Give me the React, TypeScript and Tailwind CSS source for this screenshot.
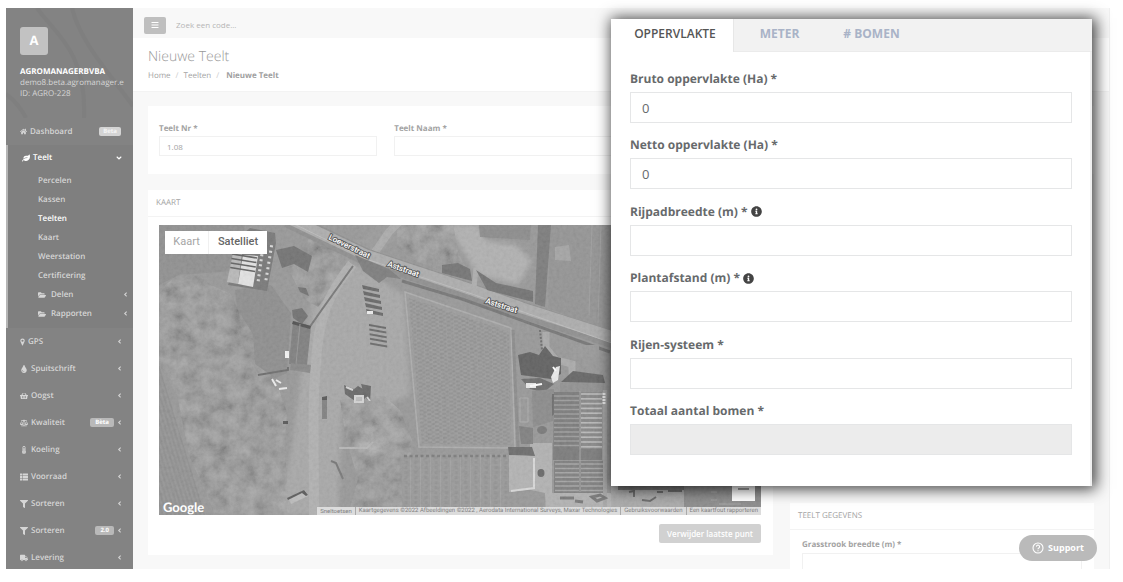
import type { ComponentType, ReactNode } from "react";
import {
  FaAngleDown,
  FaAngleLeft,
  FaBalanceScale,
  FaBars,
  FaFilter,
  FaFolderOpen,
  FaHome,
  FaInfoCircle,
  FaLeaf,
  FaShoppingBasket,
  FaThermometerThreeQuarters,
  FaThList,
  FaTint,
  FaTruck,
} from "react-icons/fa";

type IconType = ComponentType<{ className?: string }>;

function MarkerIcon({ className }: { className?: string }) {
  return (
    <svg viewBox="0 0 10 16" fill="currentColor" className={className} aria-hidden="true">
      <path
        fillRule="evenodd"
        d="M5 1a4.5 4.5 0 0 0-4.5 4.5c0 1 .3 1.600.6 2.200L4.200 14.400a.9.9 0 0 0 1.600 0L8.900 7.700c.3-.6.6-1.200.6-2.200A4.500 4.500 0 0 0 5 1Zm0 2.300a2.200 2.200 0 1 1 0 4.400 2.200 2.200 0 0 1 0-4.400Z"
      />
    </svg>
  );
}

interface NavItem {
  label: string;
  icon: IconType;
  badge?: string;
}

const navItems: NavItem[] = [
  { label: "GPS", icon: MarkerIcon },
  { label: "Spuitschrift", icon: FaTint },
  { label: "Oogst", icon: FaShoppingBasket },
  { label: "Kwaliteit", icon: FaBalanceScale, badge: "Bèta" },
  { label: "Koeling", icon: FaThermometerThreeQuarters },
  { label: "Voorraad", icon: FaThList },
  { label: "Sorteren", icon: FaFilter },
  { label: "Sorteren", icon: FaFilter, badge: "2.0" },
  { label: "Levering", icon: FaTruck },
];

const subItems = ["Percelen", "Kassen", "Teelten", "Kaart", "Weerstation", "Certificering"];
const subFolders = ["Delen", "Rapporten"];

function Badge({ children }: { children: ReactNode }) {
  return (
    <span className="rounded-[2px] bg-[#b9b9b9] px-[5px] text-[6px] leading-[9px] font-bold text-white">
      {children}
    </span>
  );
}

function Sidebar() {
  return (
    <nav className="w-[127px] shrink-0 overflow-hidden bg-[#838383] text-[8px] font-semibold text-[#d6d6d6]">
      <div className="relative h-[110px] overflow-hidden px-3.5 pt-[19px]">
        <svg viewBox="0 0 127 110" className="absolute inset-0 h-full w-full" aria-hidden="true">
          <g fill="none" stroke="#7f7f7f" strokeWidth="4">
            <path d="M31 0c16 24 50 42 47 110" />
            <path d="M66 0c8 34 38 66 61 98" />
            <path d="M0 86c8 6 14 12 20 24" />
          </g>
        </svg>
        <div className="relative flex h-7 w-7 items-center justify-center rounded-[3px] bg-[#c2c2c2] text-[13px] font-bold text-white">
          A
        </div>
        <div className="relative mt-[11px] leading-[11px] font-normal whitespace-nowrap">
          <p className="font-bold text-white">AGROMANAGERBVBA</p>
          <p>demo8.beta.agromanager.e</p>
          <p>ID: AGRO-228</p>
        </div>
      </div>
      <a href="#dashboard" className="flex h-[27px] items-center px-3.5">
        <FaHome className="mr-[3px] size-[7px]" />
        <span className="flex-1">Dashboard</span>
        <span className="mr-[-2px] rounded-[2px] bg-[#d4d4d4] px-1 text-[6px] leading-[9px] font-bold text-[#f5f5f5]">
          Beta
        </span>
      </a>
      <div className="border-l-2 border-[#b5b5b5] bg-[#7f7f7f] pb-[5px]">
        <a href="#teelt" className="flex h-[26px] items-center pr-[10px] pl-3.5 text-white">
          <FaLeaf className="mr-[3px] size-2" />
          <span className="flex-1">Teelt</span>
          <FaAngleDown className="size-2" />
        </a>
        <ul>
          {subItems.map((label) => (
            <li key={label}>
              <a
                href={"#" + label.toLowerCase()}
                className={
                  label === "Teelten"
                    ? "flex h-[19px] items-center pl-[30px] text-white"
                    : "flex h-[19px] items-center pl-[30px]"
                }
              >
                {label}
              </a>
            </li>
          ))}
          {subFolders.map((label) => (
            <li key={label}>
              <a
                href={"#" + label.toLowerCase()}
                className="flex h-[19px] items-center pr-1 pl-[30px]"
              >
                <FaFolderOpen className="mr-[5px] size-2" />
                <span className="flex-1">{label}</span>
                <FaAngleLeft className="size-[7px]" />
              </a>
            </li>
          ))}
        </ul>
      </div>
      <ul>
        {navItems.map(({ label, icon: Icon, badge }, i) => (
          <li key={i}>
            <a href={"#menu-" + i} className="flex h-[27px] items-center pr-[10px] pl-3.5">
              <Icon className="mr-[3px] h-2 w-auto" />
              <span className="flex-1">{label}</span>
              {badge && <Badge>{badge}</Badge>}
              <FaAngleLeft className="ml-[2px] size-[7px]" />
            </a>
          </li>
        ))}
      </ul>
    </nav>
  );
}

const range = (n: number) => Array.from({ length: n }, (_, i) => i);

function AerialMap() {
  return (
    <svg
      viewBox="159 225 602 290"
      preserveAspectRatio="xMinYMin slice"
      className="block h-[290px] w-full"
      role="img"
      aria-label="Satelliet"
    >
      <defs>
        <filter id="grain" x="0" y="0" width="100%" height="100%">
          <feTurbulence type="fractalNoise" baseFrequency="0.3" numOctaves="3" seed="4" />
          <feColorMatrix values="0.9 0 0 0 0.1  0.9 0 0 0 0.1  0.9 0 0 0 0.1  0 0 0 0 1" />
        </filter>
        <filter id="canopy" x="0" y="0" width="100%" height="100%">
          <feTurbulence type="fractalNoise" baseFrequency="0.07" numOctaves="5" seed="11" />
          <feColorMatrix values="1.300 0 0 0 -0.12  1.300 0 0 0 -0.12  1.300 0 0 0 -0.12  0 0 0 0 1" />
        </filter>
        <filter id="soft">
          <feGaussianBlur stdDeviation="2.5" />
        </filter>
        <clipPath id="woods">
          <path d="M159 290l20-16 22 2 8 8 22 10 8 18 14 22 2 30 20 14 12 34-2 40 4 63H215l-26-60-12-60-18-30Z" />
          <path d="M310 237l46 4-8 26-30 40-14-8-16-30Z" />
          <path d="M340 400l44-4 16 14 12 30-4 75h-60l10-36-12-40Z" />
          <path d="M397 225h56l6 30 12 20-14 2-42-16-18-14Z" />
        </clipPath>
        <pattern id="orchard" width="7.500" height="4" patternUnits="userSpaceOnUse" patternTransform="rotate(-2)">
          <path d="M0 1h4M4 3h3" stroke="#868686" strokeWidth="1.100" />
        </pattern>
        <pattern id="rows" width="10" height="5" patternUnits="userSpaceOnUse">
          <path d="M0 0v5" stroke="#a3a3a3" strokeWidth="1.500" />
          <path d="M6 1v3" stroke="#929292" strokeWidth="3" />
        </pattern>
        <pattern id="furrows" width="4" height="8" patternUnits="userSpaceOnUse" patternTransform="rotate(-17)">
          <path d="M1 0v8" stroke="#8a8a8a" strokeWidth="1.200" />
        </pattern>
      </defs>
      <rect x="159" y="225" width="602" height="290" fill="#979797" />

      {/* fields and open ground */}
      <path d="M159 225h86l-12 46-54 4-20 10Z" fill="#8f8f8f" />
      <path d="M235 290l36-5 20 28-4 60-24 10-22-40Z" fill="#8d8d8d" />
      <path
        d="M354 263l28 18 22 14 6 100-24 10-44 4-4 106h-60l14-66 10-84 10-62Z"
        fill="#a7a7a7"
        filter="url(#soft)"
      />
      <path d="M370 423l22-12 8 20-18 22-28-4Z" fill="#b0b0b0" filter="url(#soft)" />
      <path d="M448 225h30l8 16 30 4 16 16-14 24-40-10-16-26Z" fill="#b0b0b0" filter="url(#soft)" />
      <path d="M479 225h52l-1 15-50-3Z" fill="#8b8b8b" />
      <path d="M550 225h80v115l-82-32Z" fill="#939393" />
      <path d="M555 247l14-2 2 16-16-1Z" fill="#a4a4a4" />
      <path d="M592 225l-3 90M601 225l-3 98" stroke="#9f9f9f" fill="none" />
      <path d="M378 225h34l-34 30-24-10Z" fill="#9a9a9a" />
      <path d="M159 365l46 150h-46Z" fill="#949494" />
      <path d="M159 365l46 150h-46Z" fill="url(#furrows)" />

      {/* tree cover */}
      <g clipPath="url(#woods)">
        <rect x="159" y="225" width="320" height="290" fill="#828282" opacity="0.4" />
        <rect x="159" y="225" width="320" height="290" filter="url(#canopy)" opacity="0.24" />
      </g>

      {/* roads */}
      <path d="M375 252l14-20 10-10" stroke="#ababab" strokeWidth="8" fill="none" />
      <path d="M352 264c-20 26-34 48-36 100-4 40-2 80-2 151" stroke="#b0b0b0" strokeWidth="10" fill="none" />
      <path d="M288 219l78 38 106 35 50 18 110 36" stroke="#8e8e8e" strokeWidth="17" fill="none" />
      <path d="M288 218l78 37 106 35 50 18 110 35" stroke="#acacac" strokeWidth="11" fill="none" />
      <path d="M290 222l76 37 106 35 140 49" stroke="#bcbcbc" strokeWidth="1" fill="none" />
      <path d="M402 281l60 18 148 53" stroke="#757575" strokeWidth="3" fill="none" />
      <path d="M546 332v16l10 12 16 4v12" stroke="#aaa" strokeWidth="7" fill="none" />
      <path d="M353 266l-30 42-14 20" stroke="#757575" strokeWidth="2" fill="none" />
      <path d="M476 268l-2 20" stroke="#adadad" strokeWidth="5" />

      {/* ponds and hedges */}
      <path d="M442 265l16-2 12 6 2 12-30-8Z" fill="#737373" />
      <path d="M476 270l20 13 37 8v11l-46-12Z" fill="#717171" />
      <path d="M538 225h13l-6 82-10-3Z" fill="#7b7b7b" />
      <path d="M355 255l34 14 12 10-14-2-8 6-16-12Z" fill="#7c7c7c" />
      <path d="M276 250l18-4 18 10-4 16-14-8-12 4Z" fill="#717171" />
      <path d="M298 287l8 1 3 8-9-4ZM292 310l10-2 6 8-6 8-9-6Z" fill="#707070" />

      {/* glasshouse */}
      <path d="M233 268l5-30 12-10 25 5 1 10-9 48-39-6Z" fill="#777" />
      <path d="M227 282l6-29 9 1-4 30Z" fill="#b8b8b8" />
      <path d="M238 284l5-29 15 1-5 31Z" fill="#e2e2e2" />
      {range(4).map((i) => (
        <path key={i} d={`M${232 - i * 0.6} ${254 + i * 4.500}l25 4`} stroke="#5f5f5f" strokeWidth="1.600" />
      ))}
      {range(7).map((i) => (
        <path
          key={i}
          d={`M${261 - i * 0.7} ${250 + i * 5}l3 .5M${270 - i * 0.9} ${246 + i * 5.500}l3 .5`}
          stroke="#d8d8d8"
          strokeWidth="2"
        />
      ))}

      {/* barn by the drive */}
      <path d="M293 321l18 5-4 39-18-1Z" fill="#7e7e7e" />
      <path d="M293 321l18 5-1 3-18-5Z" fill="#505050" />
      <path d="M300 324l-4 40" stroke="#969696" />
      <path d="M285 351h4v7h-4Z" fill="#f4f4f4" />
      <path d="M258 375l30-5v-3" stroke="#6b6b6b" strokeWidth="2" fill="none" />
      <path d="M291 363l20 2-1 8-20-3Z" fill="#888" />
      <path d="M272 379l4 7M276 380l5 3M279 389l8-1" stroke="#ededed" strokeWidth="2" />

      {/* parked trailers */}
      {range(5).map((i) => (
        <g key={i}>
          <path d={`M${362 + i} ${285 + i * 6}l17 4v3l-16-3Z`} fill="#666" />
          <path d={`M${369 + i * 0.3} ${324 + i * 4.600}l17 3v2l-17-3Z`} fill="#686868" />
        </g>
      ))}
      <path d="M367 311h6v3h-6Z" fill="#eee" />

      {/* small sheds */}
      <path d="M344 385l10 4 4-3 10 6-5 10-8-1-10-7ZM361 384l10 2-1 16-5-5Z" fill="#676767" />
      <path d="M346 387l7 3M355 396h8v6h-8ZM367 397l3 4" stroke="#d5d5d5" strokeWidth="2" fill="#bcbcbc" />
      <path d="M322 397h5v22h-5Z" fill="#808080" />
      <path d="M322 397l5-1v4h-5ZM283 421h5v3h-5Z" fill="#555" />
      <path d="M288 498l17-8 3 6-17 8Z" fill="#bdbdbd" />
      <path d="M287 498l17-8 4 5-2 1-4-3-14 7Z" fill="#595959" />
      <path d="M331 461l5 2 7 16" stroke="#777" strokeWidth="2" fill="none" />
      <path d="M339 448h28l6-6" stroke="#b5b5b5" strokeWidth="2" fill="none" />

      {/* orchard */}
      <path d="M405 292l106 36 4 120-96-1Z" fill="#9b9b9b" stroke="#acacac" strokeWidth="1.500" />
      <path d="M409 298l100 34 2 113-89-1Z" fill="url(#orchard)" />
      <path d="M513 330l5 118" stroke="#8b8b8b" strokeWidth="3" />
      <path d="M402 456l106-2v61H402Z" fill="#989898" />
      <path d="M404 456l104-2v61H404Z" fill="url(#rows)" />
      <path d="M404 456h102" stroke="#7b7b7b" strokeWidth="2.500" strokeDasharray="3 2.500" />
      <path d="M540 330l2 20" stroke="#6a6a6a" strokeWidth="2" strokeDasharray="2 1.500" />

      {/* farmyard */}
      <path d="M530 443h22v50h80v22h-86l-1-22-14-3Z" fill="#b1b1b1" />
      <path d="M518 355l12-3 9 3 6-9 8 10 8 2v16l-10 5-30-4Z" fill="#5f5f5f" />
      <path d="M521 379l19-1 14 6-10 8-14-3Z" fill="#6b6b6b" />
      <path d="M556 367l4-1-2 14-5 3-2-6ZM526 383h10v5h-10Z" fill="#eaeaea" />
      <path d="M530 386l12-2M553 367l3 4" stroke="#fff" strokeWidth="2" />
      <path d="M532 391l22-2-1 32-20 6Z" fill="#8a8a8a" />
      <path d="M520 398h8v24h-8Z" fill="none" stroke="#aaa" />
      <path d="M508 447h24l3 9-26-1Z" fill="#6b6b6b" />
      <path d="M509 455l25 1v33l-25 3Z" fill="#b2b2b2" />
      <path d="M511 491l23-3v-30" stroke="#d8d8d8" strokeWidth="2" fill="none" />
      <path d="M519 426l14 2v16h-12Z" fill="#7f7f7f" />
      <ellipse cx="542" cy="430" rx="5" ry="4" fill="#777" />
      <ellipse cx="541" cy="473" rx="3.500" ry="4" fill="#666" />
      <path d="M561 382l12-11 30 4 2 8Z" fill="#646464" />
      <path d="M560 383h44v9h-44Z" fill="#909090" />
      <path d="M552 394h10v14l-10 8Z" fill="#6b6b6b" />
      <path d="M573 345h26v12h-26Z" fill="#999" />
      <path d="M554 392h48v68h-49Z" fill="#7a7a7a" />
      <path d="M554 461h49v32h-49Z" fill="#7e7e7e" />
      <path d="M580 392h22v57h-22Z" fill="#868686" />
      {range(12).map((i) => (
        <path key={i} d={`M554 ${396 + i * 4.500}h25`} stroke="#9c9c9c" strokeWidth="1.500" />
      ))}
      {range(12).map((i) => (
        <path key={i} d={`M581 ${394 + i * 4.800}h21`} stroke="#b8b8b8" strokeWidth="1.700" />
      ))}
      {range(7).map((i) => (
        <path key={i} d={`M555 ${464 + i * 4.400}h24M581 ${464 + i * 4.400}h22`} stroke="#a4a4a4" strokeWidth="1.500" />
      ))}
      <path d="M580 391v101" stroke="#a5a5a5" />
      <path d="M603 390h4v125h-4Z" fill="#a7a7a7" />
      <path d="M604 393v12" stroke="#f0f0f0" strokeWidth="3" strokeDasharray="2 1" />
      <path d="M560 498h14M575 501l8 1M592 497l8-2 5 3-8 3Z" stroke="#767676" strokeWidth="3" fill="none" />

      {/* strip along the lower right */}
      <path d="M611 480h73v35h-73Z" fill="#a9a9a9" />
      <path d="M618 480h66v10h-66Z" fill="#707070" />
      <path d="M629 492l5-1v6M642 500l8 1 6-4M668 491h14M657 492h6" stroke="#666" strokeWidth="2" fill="none" />
      <path d="M684 480h77v35h-77Z" fill="#8b8b8b" />
      <path d="M711 492h6M711 500h6M719 504h22" stroke="#a3a3a3" />

      <rect x="159" y="225" width="602" height="290" filter="url(#grain)" opacity="0.09" />

      <g
        fill="#fff"
        stroke="#5d5d5d"
        strokeWidth="2"
        paintOrder="stroke"
        fontFamily="Roboto, sans-serif"
        fontSize="8"
        fontWeight="500"
      >
        <text transform="translate(328 239) rotate(26)">Loeverstraat</text>
        <text transform="translate(387 266) rotate(20)">Aststraat</text>
        <text transform="translate(485 303) rotate(18)">Aststraat</text>
      </g>
    </svg>
  );
}

function MapPanel() {
  return (
    <div className="relative font-['Roboto',sans-serif]">
      <AerialMap />
      <div className="absolute top-[6px] left-[6px] flex h-[23px] bg-white text-[11px] text-[#a5a5a5]">
        <button type="button" className="w-11 border-r border-[#f0f0f0]">
          Kaart
        </button>
        <button type="button" className="w-[58px] font-medium text-[#666]">
          Satelliet
        </button>
      </div>
      <span className="absolute bottom-0 left-1 font-['Lato',sans-serif] text-[13px] leading-4 font-bold text-white">
        Google
      </span>
      <button
        type="button"
        aria-label="Uitzoomen"
        className="absolute right-[6px] bottom-[14px] flex h-6 w-[23px] items-center justify-center bg-white"
      >
        <span className="h-[2px] w-[11px] bg-[#a0a0a0]" />
      </button>
      <div className="absolute right-0 bottom-0 flex divide-x divide-[#aaa] bg-[#dcdcdc] text-[6px] leading-2 whitespace-nowrap text-[#808080]">
        <button type="button" className="px-[3px]">
          Sneltoetsen
        </button>
        <span className="px-[3px]">
          Kaartgegevens ©2022 Afbeeldingen ©2022 , Aerodata International Surveys, Maxar Technologies
        </span>
        <a href="#voorwaarden" className="px-[3px]">
          Gebruiksvoorwaarden
        </a>
        <a href="#kaartfout" className="px-[3px]">
          Een kaartfout rapporteren
        </a>
      </div>
    </div>
  );
}

const fields = [
  { id: "bruto", label: "Bruto oppervlakte (Ha) *", value: "0" },
  { id: "netto", label: "Netto oppervlakte (Ha) *", value: "0" },
  { id: "rijpad", label: "Rijpadbreedte (m) *", value: "", info: true },
  { id: "plant", label: "Plantafstand (m) *", value: "", info: true },
  { id: "rijen", label: "Rijen-systeem *", value: "" },
  { id: "totaal", label: "Totaal aantal bomen *", value: "", disabled: true },
];

function SurfacePanel() {
  return (
    <section className="absolute top-[19px] right-[31px] flex h-[467px] w-[481px] flex-col bg-white text-[12px] text-[#676a6c] shadow-[2px_1px_14px_2px_rgba(0,0,0,0.75)]">
      <div role="tablist" className="flex h-[33px] shrink-0 border-b border-[#ebebeb] bg-[#f2f2f2] font-semibold text-[#a9b3c7]">
        <button
          type="button"
          role="tab"
          aria-selected="true"
          className="-mb-px w-[123px] border-r border-[#e7e7e7] bg-white pb-[3px] pl-[6px] text-[#555]"
        >
          OPPERVLAKTE
        </button>
        <button type="button" role="tab" aria-selected="false" className="w-[91px] pb-[3px] font-bold">
          METER
        </button>
        <button type="button" role="tab" aria-selected="false" className="w-[93px] pb-[3px] font-bold">
          # BOMEN
        </button>
      </div>
      <form className="flex flex-1 flex-col justify-between border-r-2 border-[#f0f0f0] pt-[19px] pr-[18px] pb-[31px] pl-[19px]">
        {fields.map((f) => (
          <div key={f.id}>
            <label htmlFor={f.id} className="mb-[5px] flex items-center gap-[3px] leading-4 font-bold">
              {f.label}
              {f.info && <FaInfoCircle className="size-[11px] text-[#444]" />}
            </label>
            <input
              id={f.id}
              type="text"
              defaultValue={f.value}
              disabled={f.disabled}
              className="block h-[31px] w-full border border-[#e5e6e7] bg-white px-[11px] text-[13px] outline-none disabled:bg-[#ececec]"
            />
          </div>
        ))}
      </form>
    </section>
  );
}

export default function App() {
  return (
    <div className="relative flex h-screen overflow-hidden bg-white pt-2 pr-[13px] pb-[13px] pl-[6px] font-['Open_Sans',sans-serif] text-[8px] text-[#a3a3a3] [text-rendering:geometricPrecision]">
      <Sidebar />
      <div className="min-w-0 flex-1 overflow-hidden border-r border-[#f0f0f0] bg-[#f8f8f8]">
        <div className="flex h-[30px] items-center pt-1 pl-[11px]">
          <button
            type="button"
            aria-label="Menu"
            className="mr-[10px] flex h-[17px] w-[22px] items-center justify-center rounded-[2px] bg-[#bfbfbf] text-white"
          >
            <FaBars className="size-2" />
          </button>
          <input
            type="text"
            aria-label="Zoek een code"
            placeholder="Zoek een code..."
            className="w-40 bg-transparent text-[8px] outline-none placeholder:text-[#b5b5b5]"
          />
        </div>
        <header className="h-[54px] border-b border-[#f3f3f3] bg-white pt-[10px] pl-[15px]">
          <h1 className="text-[14px] leading-[18px] font-light text-[#999]">Nieuwe Teelt</h1>
          <nav className="mt-1 flex leading-[11px]">
            <a href="#home">Home</a>
            <span className="mx-[5px] text-[#ccc]">/</span>
            <a href="#teelten">Teelten</a>
            <span className="mr-[7px] ml-[5px] text-[#ccc]">/</span>
            <strong className="text-[#a0a0a0]">Nieuwe Teelt</strong>
          </nav>
        </header>
        <main className="pt-[14px] pr-[15px] pl-[15px]">
          <section className="grid h-[68px] grid-cols-4 gap-[17px] bg-white px-[11px] pt-4">
            <div>
              <label htmlFor="teelt-nr" className="block leading-[14px] font-bold">
                Teelt Nr *
              </label>
              <input
                id="teelt-nr"
                type="text"
                defaultValue="1.08"
                className="block h-5 w-full border border-[#f1f1f1] px-[7px] outline-none"
              />
            </div>
            <div className="col-span-2">
              <label htmlFor="teelt-naam" className="block leading-[14px] font-bold">
                Teelt Naam *
              </label>
              <input
                id="teelt-naam"
                type="text"
                className="block h-5 w-full border border-[#f1f1f1] px-[7px] outline-none"
              />
            </div>
          </section>
          <div className="mt-4 grid grid-cols-[minmax(0,625fr)_minmax(0,304fr)] items-start gap-[17px]">
            <section className="h-[365px] bg-white">
              <h2 className="h-[27px] border-b border-[#f3f3f3] pl-2 leading-[26px]">KAART</h2>
              <div className="pt-2 pr-3 pl-[11px]">
                <MapPanel />
                <div className="mt-[9px] flex justify-end">
                  <button
                    type="button"
                    className="h-[19px] rounded-[2px] bg-[#d1d1d1] px-2 font-semibold whitespace-nowrap text-white"
                  >
                    Verwijder laatste punt
                  </button>
                </div>
              </div>
            </section>
            <div className="flex flex-col gap-4">
              <section className="h-[297px] bg-white" />
              <section className="h-[120px] bg-white">
                <h2 className="h-[27px] border-b border-[#f3f3f3] pl-2 leading-[26px]">TEELT GEGEVENS</h2>
                <div className="px-3 pt-[7px]">
                  <label htmlFor="grasstrook" className="block leading-4 font-bold">
                    Grasstrook breedte (m) *
                  </label>
                  <input
                    id="grasstrook"
                    type="text"
                    className="block h-5 w-full border border-[#f1f1f1] px-[7px] outline-none"
                  />
                </div>
              </section>
            </div>
          </div>
        </main>
      </div>
      <SurfacePanel />
      <button
        type="button"
        className="absolute right-[26px] bottom-[21px] flex h-[26px] w-[78px] items-center justify-center gap-1 rounded-full bg-[#bababa] text-[9px] font-bold text-white"
      >
        <svg viewBox="0 0 24 24" className="size-3" fill="none" stroke="currentColor" strokeWidth="2.200" aria-hidden="true">
          <circle cx="12" cy="12" r="10" />
          <path d="M8.800 9.200a3.200 3.200 0 1 1 4.800 3c-1 .6-1.600 1.200-1.600 2.300M12 16.500v2" />
        </svg>
        Support
      </button>
    </div>
  );
}
